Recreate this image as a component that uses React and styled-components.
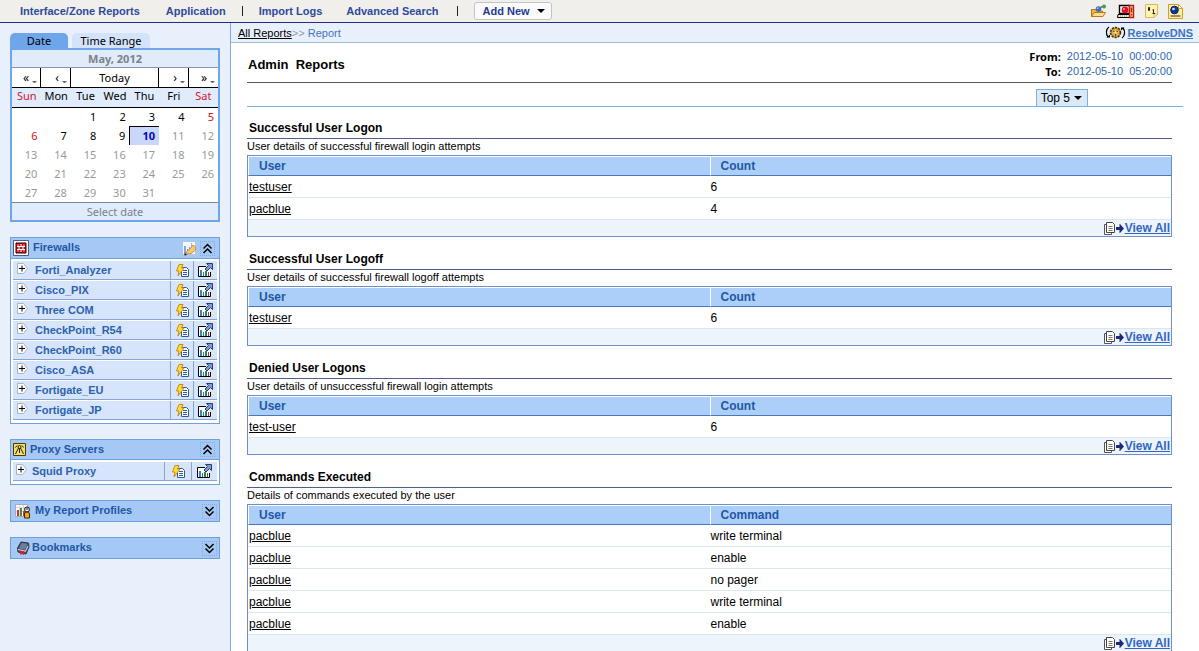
import React from 'react';
import styled, { createGlobalStyle } from 'styled-components';

const GlobalStyle = createGlobalStyle`
  * { box-sizing: border-box; }
  html { scrollbar-width: none; }
  body {
    margin: 0;
    background: #fff;
    color: #000;
    font-family: "Liberation Sans", Arial, sans-serif;
    font-size: 11px;
  }
  button {
    font: inherit;
    color: inherit;
    padding: 0;
    border: 0;
    background: none;
    cursor: pointer;
  }
  svg { display: block; flex: none; }
`;

const tahoma = '"Noto Sans", Tahoma, sans-serif';

/* ---------- icons ---------- */

const FolderIcon = () => (
  <svg width="17" height="14" viewBox="0 0 17 14">
    <path d="M1.500 12.500v-7h4l1 1.500h6v5.500z" fill="#f5b942" stroke="#b5701c" />
    <path d="M1.500 12.500L4 8.500h11.500L13 12.500z" fill="#fde08c" stroke="#c07818" />
    <circle cx="8.500" cy="5" r="2.800" fill="#2f6fc4" />
    <circle cx="7.700" cy="4.200" r=".9" fill="#a8d0f8" />
    <circle cx="14" cy="2.500" r="2" fill="#37a058" />
    <circle cx="11.500" cy="3" r="1" fill="#d8483c" />
  </svg>
);

const AlertIcon = () => (
  <svg width="18" height="15" viewBox="0 0 18 15">
    <path d="M2.500 1.500h10v8h-10z" fill="#fff" stroke="#000" strokeWidth="1.400" />
    <path d="M1 10.500h11l2 3H.5z" fill="#ece8e0" stroke="#000" />
    <path d="M3 12h8" stroke="#888" strokeDasharray="1 1" />
    <circle cx="8" cy="6" r="3.400" fill="#dc1426" />
    <circle cx="7" cy="5" r="1.100" fill="#ff9aa0" />
    <path d="M12.500 1.500h4v12h-4z" fill="#f8d070" stroke="#c01818" strokeWidth="1.400" />
    <path d="M14.500 3.500v5M14.500 10v1.500" stroke="#c01818" strokeWidth="1.400" />
  </svg>
);

const BinaryIcon = () => (
  <svg width="13" height="14" viewBox="0 0 13 14">
    <path d="M.5.5h12v9.500L9 13.500H.5z" fill="#fff3b0" stroke="#d9b864" />
    <path d="M9 13.500V10h3.500z" fill="#fff" stroke="#d9b864" />
    <path d="M3.500 3.500h1v3h-1zM7.500 6l1-.5V9M7.500 9.500H10" fill="none" stroke="#222" />
  </svg>
);

const ReportPageIcon = () => (
  <svg width="15" height="15" viewBox="0 0 15 15">
    <path d="M.5.5h10l4 4v10H.5z" fill="#fff0a0" stroke="#d0a028" />
    <path d="M10.500.5v4h4z" fill="#fff" stroke="#d0a028" />
    <circle cx="6.500" cy="6" r="3.800" fill="#1238a8" stroke="#0a1c60" />
    <circle cx="5.500" cy="5" r="1.300" fill="#d0e4ff" />
    <path d="M2.500 12h10" stroke="#303030" />
  </svg>
);

const DnsIcon = () => (
  <svg width="21" height="13" viewBox="0 0 21 13">
    <path d="M4 1C1 3 .5 8 3 11" fill="none" stroke="#000" strokeWidth="1.200" />
    <path d="M1.500 11.500h3.500v-3z" />
    <path d="M17 12c3-2 3.500-7 1-10" fill="none" stroke="#000" strokeWidth="1.200" />
    <path d="M19.500 1.500H16v3z" />
    <circle cx="10.500" cy="6.500" r="5" fill="#c8922c" stroke="#4c300a" strokeWidth="1.500" strokeDasharray="2.200 1" />
    <circle cx="10.500" cy="6.500" r="3.500" fill="#e0b04c" />
    <path d="M8 5l2.500 1.500L13 5M10.500 6.500V10" fill="none" stroke="#5c3c0c" />
    <circle cx="10.500" cy="6.500" r="1.200" fill="#fff2c0" />
  </svg>
);

const FirewallIcon = () => (
  <svg width="16" height="16" viewBox="0 0 16 16">
    <path d="M.5.5h15v15H.5z" fill="#fff" stroke="#4d5c80" />
    <path d="M3 3h10v10H3z" fill="#c4161c" stroke="#300" />
    <path d="M4 6.500h8M4 9.500h8M8 4v2M6 7v2M10 7v2M8 10v2" stroke="#fff" />
    <path d="M5 4v2M11 4v2M5 10v2M11 10v2" stroke="#f0a0a0" />
  </svg>
);

const ProxyIcon = () => (
  <svg width="13" height="13" viewBox="0 0 13 13">
    <path d="M.5.5h12v12H.5z" fill="#f9dc62" stroke="#4a3c08" />
    <circle cx="6.500" cy="4" r="1.500" fill="none" stroke="#222" />
    <path d="M6.500 5.500V10M5.500 5l-3 6M7.500 5l3 6M4 2.500L2.500 4.500M9 2.500l1.500 2" fill="none" stroke="#222" />
  </svg>
);

const ProfilesIcon = () => (
  <svg width="16" height="16" viewBox="0 0 16 16">
    <path d="M.5 1.500h12v12H.5z" fill="#fff" stroke="#a8a8b8" />
    <path d="M1 4.500h11M1 8.500h11M4.500 2v11M8.500 2v11" stroke="#dcd8e4" />
    <path d="M2 7h2v6H2z" fill="#d93025" />
    <path d="M5 5h2v8H5z" fill="#35953c" />
    <path d="M8 8h2v5H8z" fill="#d93025" />
    <circle cx="12" cy="6.500" r="2.500" fill="#fff" stroke="#111" />
    <path d="M10.500 6h3" stroke="#111" />
    <path d="M9.500 15V11q0-2 2.500-2t2.500 2v4z" fill="#f0a820" stroke="#3c2808" />
  </svg>
);

const BookmarkIcon = () => (
  <svg width="14" height="15" viewBox="0 0 14 15">
    <path d="M5 1l7.500 1L13 6l-3 7-8-2-.5-4z" fill="#44546c" stroke="#2c3646" />
    <path d="M5.500 2l6 .8-2.500 6-6-1.300z" fill="#6c7e98" />
    <path d="M2 8.500l7.500 1.800L12 5" fill="none" stroke="#dfe6f0" />
    <path d="M3.500 9.500L8 10.500V14l-2-1-1.500 1z" fill="#d8182c" />
  </svg>
);

const EditChartIcon = () => (
  <svg width="14" height="15" viewBox="0 0 14 15">
    <path d="M.5.5h13v13H.5z" fill="#f4f6fb" stroke="#b4c4de" />
    <path d="M2 5h2v7H2z" fill="#7aa8ec" />
    <path d="M5 8h1v4H5z" fill="#35a04a" />
    <path d="M7 6h1v4H7z" fill="#a890d8" />
    <path d="M9.500 2v5" stroke="#8cb8e8" />
    <path d="M4 13l1-3 3-2 3-4 2.500 2v3L9 12.500z" fill="#f6c878" stroke="#c89440" />
    <path d="M2.500 11.500l2.500 2.500-2.500.5z" fill="#111" />
  </svg>
);

const ChevronsIcon = ({ down }) => (
  <svg width="11" height="11" viewBox="0 0 11 11">
    <path
      d={down ? 'M1.500 1l4 4 4-4M1.500 5.500l4 4 4-4' : 'M1.500 5.500l4-4 4 4M1.500 10l4-4 4 4'}
      fill="none"
      stroke="#000"
      strokeWidth="1.500"
    />
  </svg>
);

const ExpandIcon = () => (
  <svg width="11" height="11" viewBox="0 0 11 11">
    <path d="M.5.5h6l4 5-4 5h-6z" fill="#fff" stroke="#a8b4c8" />
    <path d="M2 5.500h6M5 2.500v6" stroke="#000" />
  </svg>
);

const QuickReportIcon = () => (
  <svg width="13" height="13" viewBox="0 0 13 13">
    <path d="M5.500 3.500h5l2 2v7h-7z" fill="#fff" stroke="#2b5aa0" />
    <path d="M7 6.500h4M7 8.500h4M7 10.500h4" stroke="#2b5aa0" />
    <path d="M3 .5h4L5.500 4H8L2 12l1-5H.5z" fill="#ffe03a" stroke="#d08a10" />
  </svg>
);

const ChartOutIcon = () => (
  <svg width="15" height="14" viewBox="0 0 15 14">
    <path d="M8 3.500H.5v10h12V9" fill="#fff" stroke="#000" />
    <path d="M2 7h2v6H2z" fill="#3f7fd0" />
    <path d="M5 9h1v4H5z" fill="#2f8d46" />
    <path d="M7 8h2v5H7z" fill="#1f8a54" />
    <path d="M10 9h1v4h-1z" fill="#c03030" />
    <path d="M8.500.5h6v6l-2-2-3.500 3.500-2-2 3.500-3.500z" fill="#7c9ed4" stroke="#2c3c60" />
  </svg>
);

const CopyIcon = () => (
  <svg width="11" height="13" viewBox="0 0 11 13">
    <path d="M.5 2.500h7v10h-7z" fill="#fff" stroke="#555" />
    <path d="M2.500.5h6l2 2v8h-8z" fill="#fff" stroke="#444" />
    <path d="M4.500 4.500h4M4.500 6.500h4M4.500 8.500h4" stroke="#777" />
  </svg>
);

const ArrowIcon = () => (
  <svg width="8" height="9" viewBox="0 0 8 9">
    <path d="M0 3h3.500V0H4l4 4.500L4 9h-.5V6H0z" fill="#1b2a7c" />
  </svg>
);

const CaretIcon = ({ size = 8, color = '#000' }) => (
  <svg width={size} height={size / 2} viewBox="0 0 8 4">
    <path d="M0 0h8L4 4z" fill={color} />
  </svg>
);

/* ---------- top bar ---------- */

const TopBar = styled.header`
  display: flex;
  align-items: center;
  justify-content: space-between;
  height: 23px;
  padding: 0 16px 0 20px;
  background: #f0efeb;
  border-bottom: 1px solid #1f2f86;
`;

const Nav = styled.nav`
  display: flex;
  align-items: center;
`;

const NavLink = styled.a`
  margin-right: ${props => props.$gap || 0}px;
  color: #2d4a9c;
  font-size: 11px;
  font-weight: bold;
  text-decoration: none;
`;

const Divider = styled.span`
  width: 1px;
  height: 10px;
  margin-right: 16px;
  background: #222;
`;

const AddNewButton = styled.button`
  display: flex;
  align-items: center;
  gap: 7px;
  height: 18px;
  padding: 0 6px 0 8px;
  border: 1px solid #c4c4c4;
  border-radius: 3px;
  background: #fbfbfb;
  color: #1f3a94;
  font-weight: bold;
`;

const ToolIcons = styled.div`
  display: flex;
  align-items: center;
  gap: 10px;
`;

/* ---------- page frame ---------- */

const Layout = styled.div`
  display: grid;
  grid-template-columns: 231px minmax(0, 1fr);
  min-height: calc(100vh - 23px);
`;

const Sidebar = styled.aside`
  display: flex;
  flex-direction: column;
  gap: 15px;
  padding: 10px 10px 0;
  border-right: 1px solid #7fa9d6;
  background: #e8f0fb;
`;

/* ---------- calendar ---------- */

const Tabs = styled.div`
  display: flex;
  gap: 4px;
`;

const Tab = styled.button`
  height: 15px;
  width: ${props => props.$width}px;
  border-radius: 5px 5px 0 0;
  background: ${props => (props.$active ? '#6da6ea' : '#d3e3fb')};
  font-family: ${tahoma};
  font-size: 11px;
  line-height: 12px;
`;

const Calendar = styled.div`
  border: 2px solid #6da6ea;
  background: #fff;
  font-family: ${tahoma};
  font-size: 11px;
`;

const CalendarTitle = styled.div`
  height: 18px;
  border-bottom: 1px solid #8a97a8;
  background: #e0ebfb;
  color: #7a828e;
  font-weight: bold;
  line-height: 17px;
  text-align: center;
`;

const CalendarNav = styled.div`
  display: grid;
  grid-template-columns: 29px 30px 1fr 30px 29px;
  height: 20px;
  border-bottom: 1px solid #000;
`;

const NavCell = styled.button`
  display: flex;
  align-items: center;
  justify-content: ${props => (props.$arrow ? 'flex-end' : 'center')};
  gap: 3px;
  padding-right: ${props => (props.$arrow ? 3 : 0)}px;
  border-right: 1px solid #000;
  font-size: ${props => (props.$arrow ? 12 : 11)}px;
  &:last-child { border-right: 0; }
  svg { margin-top: 9px; }
`;

const CalendarTable = styled.table`
  width: 100%;
  table-layout: fixed;
  border-collapse: collapse;
`;

const DayName = styled.th`
  height: 19px;
  padding: 0;
  border-bottom: 1px solid #000;
  background: #e0ebfb;
  color: ${props => (props.$weekend ? '#d0142c' : '#000')};
  font-weight: normal;
  line-height: 16px;
  vertical-align: top;
`;

const dayColor = props => {
  if (props.$selected) return '#0000c8';
  if (props.$future) return '#999';
  return props.$weekend ? '#d01414' : '#000';
};

const Day = styled.td`
  height: 19px;
  padding: 0 4px 0 0;
  color: ${dayColor};
  line-height: 17px;
  text-align: right;
  ${props => props.$selected && `
    background: #c9d8f8;
    border-top: 1px solid #000;
    border-left: 1px solid #000;
    font-weight: bold;
  `}
`;

const CalendarFooter = styled.div`
  height: 18px;
  border-top: 1px solid #7a8798;
  background: #e0ebfb;
  color: #7a828e;
  line-height: 17px;
  text-align: center;
`;

/* ---------- side panels ---------- */

const Panel = styled.section`
  border: 1px solid #6f9fdc;
  background: #fff;
`;

const PanelHeader = styled.div`
  display: flex;
  align-items: center;
  gap: ${props => props.$gap || 4}px;
  height: ${props => (props.$compact ? 20 : 21)}px;
  padding: 0 ${props => (props.$open ? 4 : 2)}px 0 ${props => props.$indent || 2}px;
  border-bottom: ${props => (props.$open ? '1px solid #6f9fdc' : '0')};
  background: #a5c8f5;
`;

const PanelTitle = styled.h2`
  flex: 1;
  align-self: flex-start;
  margin: 0;
  color: #1f57a6;
  font-size: 11px;
  line-height: 18px;
`;

const ToggleButton = styled.button`
  display: flex;
  align-items: center;
  justify-content: center;
  width: 15px;
  height: 15px;
  border: 1px dotted #88a8e8;
`;

const PanelBody = styled.div`
  padding: 2px;
`;

const DeviceRow = styled.div`
  display: grid;
  grid-template-columns: 1fr ${props => (props.$wide ? '27px 26px' : '23px 24px')};
  height: 20px;
  border-bottom: 1px solid #fff;
`;

const DeviceCell = styled.div`
  display: flex;
  align-items: flex-start;
  gap: ${props => (props.$wide ? 5 : 7)}px;
  padding: 2px 0 0 ${props => (props.$wide ? 3 : 4)}px;
  border-bottom: 1px solid #8ba4cf;
  background: #d6e5fb;
`;

const DeviceLink = styled.a`
  color: #2d62b0;
  font-weight: bold;
  line-height: 14px;
  text-decoration: none;
`;

const DeviceAction = styled.button`
  display: flex;
  align-items: center;
  justify-content: center;
  border-left: 1px solid #8ba4cf;
  border-bottom: 1px solid #8ba4cf;
  background: #d6e5fb;
`;

/* ---------- main area ---------- */

const Breadcrumb = styled.div`
  display: flex;
  justify-content: space-between;
  align-items: center;
  height: 20px;
  padding: 0 6px 0 7px;
  border-bottom: 1px solid #9dbde0;
  background: #e8f0fb;
  color: #8a9ab4;
`;

const Crumb = styled.a`
  color: #000;
`;

const CrumbCurrent = styled.span`
  color: #3f74c4;
`;

const ResolveLink = styled.a`
  display: flex;
  align-items: center;
  gap: 2px;
  color: #3f74c4;
  font-weight: bold;
`;

const Content = styled.div`
  padding: 0 27px 0 16px;
`;

const TitleRow = styled.div`
  display: flex;
  justify-content: space-between;
  align-items: center;
  height: 40px;
  padding-top: 3px;
  border-bottom: 1px solid #555a66;
`;

const PageTitle = styled.h1`
  margin: 0;
  padding-left: 1px;
  font-size: 13px;
`;

const Period = styled.dl`
  display: grid;
  grid-template-columns: auto auto;
  column-gap: 6px;
  margin: 0;
  line-height: 15px;
  text-align: right;
`;

const PeriodLabel = styled.dt`
  font-family: ${tahoma};
  font-weight: bold;
`;

const PeriodValue = styled.dd`
  margin: 0;
  color: #2f66b4;
  white-space: pre;
`;

const LimitRow = styled.div`
  display: flex;
  justify-content: flex-end;
  align-items: flex-end;
  height: 24px;
  margin-right: -11px;
  padding-right: 95px;
  border-bottom: 1px solid #7fb2da;
`;

const LimitButton = styled.button`
  display: flex;
  align-items: center;
  gap: 4px;
  height: 17px;
  padding: 0 5px 0 4px;
  border: 1px solid #7fb2da;
  border-bottom: 0;
  background: #d9e9fa;
  font-size: 12px;
`;

const Report = styled.section`
  padding: 13px 0 1px;
`;

const ReportTitle = styled.h3`
  height: 19px;
  margin: 0;
  padding-left: 2px;
  border-bottom: 1px solid #50608c;
  font-size: 12px;
  line-height: 16px;
`;

const ReportNote = styled.p`
  height: 16px;
  margin: 0;
  font-size: 11px;
  line-height: 15px;
`;

const ReportBox = styled.div`
  border: 1px solid #6d90cc;
`;

const DataTable = styled.table`
  width: 100%;
  table-layout: fixed;
  border-collapse: separate;
  border-spacing: 0;
  font-size: 12px;
`;

const HeadCell = styled.th`
  height: 20px;
  padding: 0 0 0 10px;
  border-top: 1px solid #fff;
  border-left: 1px solid #fff;
  border-bottom: 1px solid #4a76bc;
  background: #abcff8;
  color: #1f57a6;
  line-height: 16px;
  text-align: left;
`;

const Cell = styled.td`
  height: 22px;
  padding: 0 1px;
  border-bottom: 1px solid #dbe6f2;
`;

const UserLink = styled.a`
  color: #000;
`;

const ReportFooter = styled.div`
  display: flex;
  justify-content: flex-end;
  align-items: center;
  gap: 1px;
  height: 16px;
  padding-right: 1px;
  background: #eef4fc;
`;

const ViewAll = styled.a`
  color: #2f66c4;
  font-size: 12px;
  font-weight: bold;
  line-height: 14px;
`;

const dayNames = ['Sun', 'Mon', 'Tue', 'Wed', 'Thu', 'Fri', 'Sat'];
const firstWeekday = 2;
const today = 10;
const weeks = [0, 1, 2, 3, 4].map(week =>
  dayNames.map((name, i) => {
    const date = week * 7 + i - firstWeekday + 1;
    return date > 0 && date <= 31 ? date : null;
  })
);

const firewalls = [
  'Forti_Analyzer', 'Cisco_PIX', 'Three COM', 'CheckPoint_R54',
  'CheckPoint_R60', 'Cisco_ASA', 'Fortigate_EU', 'Fortigate_JP'
];

const reports = [
  {
    title: 'Successful User Logon',
    note: 'User details of successful firewall login attempts',
    column: 'Count',
    rows: [['testuser', '6'], ['pacblue', '4']]
  },
  {
    title: 'Successful User Logoff',
    note: 'User details of successful firewall logoff attempts',
    column: 'Count',
    rows: [['testuser', '6']]
  },
  {
    title: 'Denied User Logons',
    note: 'User details of unsuccessful firewall login attempts',
    column: 'Count',
    rows: [['test-user', '6']]
  },
  {
    title: 'Commands Executed',
    note: 'Details of commands executed by the user',
    column: 'Command',
    rows: [
      ['pacblue', 'write terminal'],
      ['pacblue', 'enable'],
      ['pacblue', 'no pager'],
      ['pacblue', 'write terminal'],
      ['pacblue', 'enable']
    ]
  }
];

const Device = ({ name, wide }) => (
  <DeviceRow $wide={wide}>
    <DeviceCell $wide={wide}>
      <button aria-label={`Expand ${name}`}><ExpandIcon /></button>
      <DeviceLink href="#">{name}</DeviceLink>
    </DeviceCell>
    <DeviceAction aria-label={`Quick reports for ${name}`}><QuickReportIcon /></DeviceAction>
    <DeviceAction aria-label={`Open charts for ${name}`}><ChartOutIcon /></DeviceAction>
  </DeviceRow>
);

const ArrowCell = ({ children }) => (
  <NavCell $arrow>{children}<CaretIcon size={5} color="#666" /></NavCell>
);

const DatePicker = () => (
  <div>
    <Tabs>
      <Tab $active $width={58}>Date</Tab>
      <Tab $width={78}>Time Range</Tab>
    </Tabs>
    <Calendar>
      <CalendarTitle>May, 2012</CalendarTitle>
      <CalendarNav>
        <ArrowCell>«</ArrowCell>
        <ArrowCell>‹</ArrowCell>
        <NavCell>Today</NavCell>
        <ArrowCell>›</ArrowCell>
        <ArrowCell>»</ArrowCell>
      </CalendarNav>
      <CalendarTable>
        <thead>
          <tr>
            {dayNames.map((name, i) => (
              <DayName key={name} $weekend={i === 0 || i === 6}>{name}</DayName>
            ))}
          </tr>
        </thead>
        <tbody>
          {weeks.map((week, w) => (
            <tr key={w}>
              {week.map((date, i) => (
                <Day key={i} $weekend={i === 0 || i === 6} $future={date > today} $selected={date === today}>
                  {date}
                </Day>
              ))}
            </tr>
          ))}
        </tbody>
      </CalendarTable>
      <CalendarFooter>Select date</CalendarFooter>
    </Calendar>
  </div>
);

const ReportTable = ({ title, note, column, rows }) => (
  <Report>
    <ReportTitle>{title}</ReportTitle>
    <ReportNote>{note}</ReportNote>
    <ReportBox>
      <DataTable>
        <thead>
          <tr>
            <HeadCell>User</HeadCell>
            <HeadCell>{column}</HeadCell>
          </tr>
        </thead>
        <tbody>
          {rows.map(([user, value], i) => (
            <tr key={i}>
              <Cell><UserLink href="#">{user}</UserLink></Cell>
              <Cell>{value}</Cell>
            </tr>
          ))}
        </tbody>
      </DataTable>
      <ReportFooter>
        <CopyIcon />
        <ArrowIcon />
        <ViewAll href="#">View All</ViewAll>
      </ReportFooter>
    </ReportBox>
  </Report>
);

const App = () => (
  <>
    <GlobalStyle />
    <TopBar>
      <Nav>
        <NavLink href="#" $gap={26}>Interface/Zone Reports</NavLink>
        <NavLink href="#" $gap={16}>Application</NavLink>
        <Divider />
        <NavLink href="#" $gap={24}>Import Logs</NavLink>
        <NavLink href="#" $gap={18}>Advanced Search</NavLink>
        <Divider />
        <AddNewButton>Add New <CaretIcon /></AddNewButton>
      </Nav>
      <ToolIcons>
        <FolderIcon />
        <AlertIcon />
        <BinaryIcon />
        <ReportPageIcon />
      </ToolIcons>
    </TopBar>
    <Layout>
      <Sidebar>
        <DatePicker />
        <Panel>
          <PanelHeader $open>
            <FirewallIcon />
            <PanelTitle>Firewalls</PanelTitle>
            <EditChartIcon />
            <ToggleButton aria-label="Collapse Firewalls"><ChevronsIcon /></ToggleButton>
          </PanelHeader>
          <PanelBody>
            {firewalls.map(name => <Device key={name} name={name} />)}
          </PanelBody>
        </Panel>
        <Panel>
          <PanelHeader $open $compact>
            <ProxyIcon />
            <PanelTitle>Proxy Servers</PanelTitle>
            <ToggleButton aria-label="Collapse Proxy Servers"><ChevronsIcon /></ToggleButton>
          </PanelHeader>
          <PanelBody>
            <Device name="Squid Proxy" wide />
          </PanelBody>
        </Panel>
        <Panel>
          <PanelHeader $compact $indent={4}>
            <ProfilesIcon />
            <PanelTitle>My Report Profiles</PanelTitle>
            <ToggleButton aria-label="Expand My Report Profiles"><ChevronsIcon down /></ToggleButton>
          </PanelHeader>
        </Panel>
        <Panel>
          <PanelHeader $compact $indent={5} $gap={2}>
            <BookmarkIcon />
            <PanelTitle>Bookmarks</PanelTitle>
            <ToggleButton aria-label="Expand Bookmarks"><ChevronsIcon down /></ToggleButton>
          </PanelHeader>
        </Panel>
      </Sidebar>
      <main>
        <Breadcrumb>
          <div>
            <Crumb href="#">All Reports</Crumb>&gt;&gt; <CrumbCurrent>Report</CrumbCurrent>
          </div>
          <ResolveLink href="#"><DnsIcon />ResolveDNS</ResolveLink>
        </Breadcrumb>
        <Content>
          <TitleRow>
            <PageTitle>Admin&nbsp; Reports</PageTitle>
            <Period>
              <PeriodLabel>From:</PeriodLabel>
              <PeriodValue>2012-05-10  00:00:00</PeriodValue>
              <PeriodLabel>To:</PeriodLabel>
              <PeriodValue>2012-05-10  05:20:00</PeriodValue>
            </Period>
          </TitleRow>
          <LimitRow>
            <LimitButton>Top 5 <CaretIcon /></LimitButton>
          </LimitRow>
          {reports.map(report => <ReportTable key={report.title} {...report} />)}
        </Content>
      </main>
    </Layout>
  </>
);

export default App;
